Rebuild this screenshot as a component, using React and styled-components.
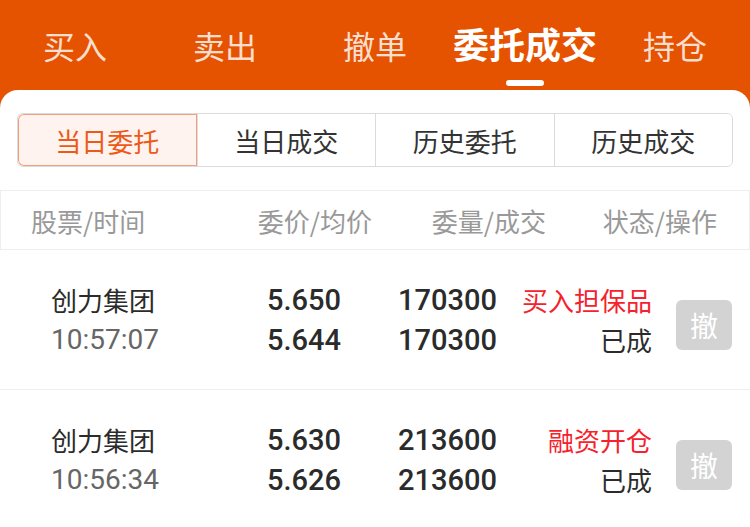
import React from "react";
import styled, { createGlobalStyle } from "styled-components";

const GlobalStyle = createGlobalStyle`
  html, body, #root { margin: 0; padding: 0; height: 100%; }
  body {
    font-family: "Noto Sans CJK SC", "Noto Sans", sans-serif;
    background: #ffffff;
    -webkit-font-smoothing: antialiased;
  }
  * { box-sizing: border-box; }
`;

const ORANGE = "#E65300";

const Page = styled.div`
  min-height: 100vh;
  background: ${ORANGE};
  display: flex;
  flex-direction: column;
`;

const TabBar = styled.nav`
  height: 90px;
  display: grid;
  grid-template-columns: repeat(5, 1fr);
`;

const Tab = styled.div`
  position: relative;
  display: flex;
  align-items: flex-start;
  justify-content: center;
  padding-top: ${(p) => (p.$active ? "21px" : "23px")};
  font-size: ${(p) => (p.$active ? "36px" : "32px")};
  line-height: 44px;
  font-weight: ${(p) => (p.$active ? 700 : 400)};
  color: ${(p) => (p.$active ? "#ffffff" : "rgba(255,255,255,0.82)")};
`;

const Indicator = styled.span`
  position: absolute;
  left: 50%;
  top: 80px;
  width: 38px;
  height: 6px;
  margin-left: -19px;
  border-radius: 3px;
  background: #ffffff;
`;

const Card = styled.main`
  flex: 1;
  background: #ffffff;
  border-radius: 18px 18px 0 0;
  padding-top: 23px;
`;

const Segments = styled.div`
  margin: 0 17px;
  height: 54px;
  display: grid;
  grid-template-columns: repeat(4, 1fr);
  border: 1px solid #dadbdf;
  border-radius: 6px;
  overflow: hidden;
`;

const Segment = styled.div`
  display: flex;
  align-items: center;
  justify-content: center;
  font-size: 26px;
  color: ${(p) => (p.$active ? "#EC5A17" : "#333333")};
  background: ${(p) => (p.$active ? "#FFF3EF" : "#ffffff")};
  border-left: ${(p) => (p.$first ? "none" : "1px solid #dadbdf")};
  box-shadow: ${(p) => (p.$active ? "inset 0 0 0 1px #F3A07C" : "none")};
  border-radius: ${(p) => (p.$active ? "6px 0 0 6px" : "0")};
`;

const Header = styled.div`
  margin-top: 23px;
  height: 60px;
  display: grid;
  grid-template-columns: 1fr 140px 174px 171px;
  align-items: center;
  padding: 0 32px 0 30px;
  border: 1px solid #eeeeee;
  font-size: 26px;
  color: #999999;
`;

const HeadCell = styled.div`
  text-align: ${(p) => (p.$left ? "left" : "right")};
  white-space: nowrap;
`;

const Row = styled.div`
  height: 140px;
  display: grid;
  grid-template-columns: 1fr 156px 179px 56px;
  align-items: center;
  padding: 0 18px 0 51px;
  border-bottom: ${(p) => (p.$last ? "none" : "1px solid #eeeeee")};
`;

const Cell = styled.div`
  display: flex;
  flex-direction: column;
  align-items: ${(p) => (p.$left ? "flex-start" : "flex-end")};
  white-space: nowrap;
`;

const NameCell = styled.div`
  display: flex;
  justify-content: space-between;
  align-items: center;
`;

const Name = styled.span`
  font-size: 26px;
  line-height: 40px;
  color: #2b2b2b;
`;

const Time = styled.span`
  font-family: Roboto, "Liberation Sans", sans-serif;
  font-size: 28px;
  line-height: 40px;
  font-weight: 400;
  color: #666666;
`;

const Num = styled.span`
  font-family: Roboto, "Liberation Sans", sans-serif;
  font-size: 29px;
  line-height: 40px;
  font-weight: 500;
  color: #2b2b2b;
`;

const Status = styled.span`
  font-size: 26px;
  line-height: 40px;
  color: ${(p) => (p.$red ? "#F5222D" : "#2b2b2b")};
`;

const StatusCell = styled(Cell)`
  margin-right: 24px;
`;

const CancelButton = styled.button`
  width: 56px;
  height: 50px;
  margin-top: 10px;
  border: none;
  border-radius: 6px;
  background: #d3d3d3;
  color: #ffffff;
  font-family: "Noto Sans CJK SC", sans-serif;
  font-size: 28px;
  padding: 0;
  display: flex;
  align-items: center;
  justify-content: center;
`;

const tabs = ["买入", "卖出", "撤单", "委托成交", "持仓"];
const segments = ["当日委托", "当日成交", "历史委托", "历史成交"];
const heads = ["股票/时间", "委价/均价", "委量/成交", "状态/操作"];

const orders = [
  { name: "创力集团", time: "10:57:07", price: "5.650", avg: "5.644", qty: "170300", done: "170300", type: "买入担保品", state: "已成" },
  { name: "创力集团", time: "10:56:34", price: "5.630", avg: "5.626", qty: "213600", done: "213600", type: "融资开仓", state: "已成" },
];

export default function App() {
  return (
    <>
      <GlobalStyle />
      <Page>
        <TabBar>
          {tabs.map((t, i) => (
            <Tab key={t} $active={i === 3}>
              {t}
              {i === 3 && <Indicator />}
            </Tab>
          ))}
        </TabBar>
        <Card>
          <Segments>
            {segments.map((s, i) => (
              <Segment key={s} $active={i === 0} $first={i === 0}>
                {s}
              </Segment>
            ))}
          </Segments>
          <Header>
            {heads.map((h, i) => (
              <HeadCell key={h} $left={i === 0}>
                {h}
              </HeadCell>
            ))}
          </Header>
          {orders.map((o, i) => (
            <Row key={o.time} $last={i === orders.length - 1}>
              <NameCell>
                <Cell $left>
                  <Name>{o.name}</Name>
                  <Time>{o.time}</Time>
                </Cell>
                <Cell>
                  <Num>{o.price}</Num>
                  <Num>{o.avg}</Num>
                </Cell>
              </NameCell>
              <Cell>
                <Num>{o.qty}</Num>
                <Num>{o.done}</Num>
              </Cell>
              <StatusCell>
                <Status $red>{o.type}</Status>
                <Status>{o.state}</Status>
              </StatusCell>
              <CancelButton>撤</CancelButton>
            </Row>
          ))}
        </Card>
      </Page>
    </>
  );
}
